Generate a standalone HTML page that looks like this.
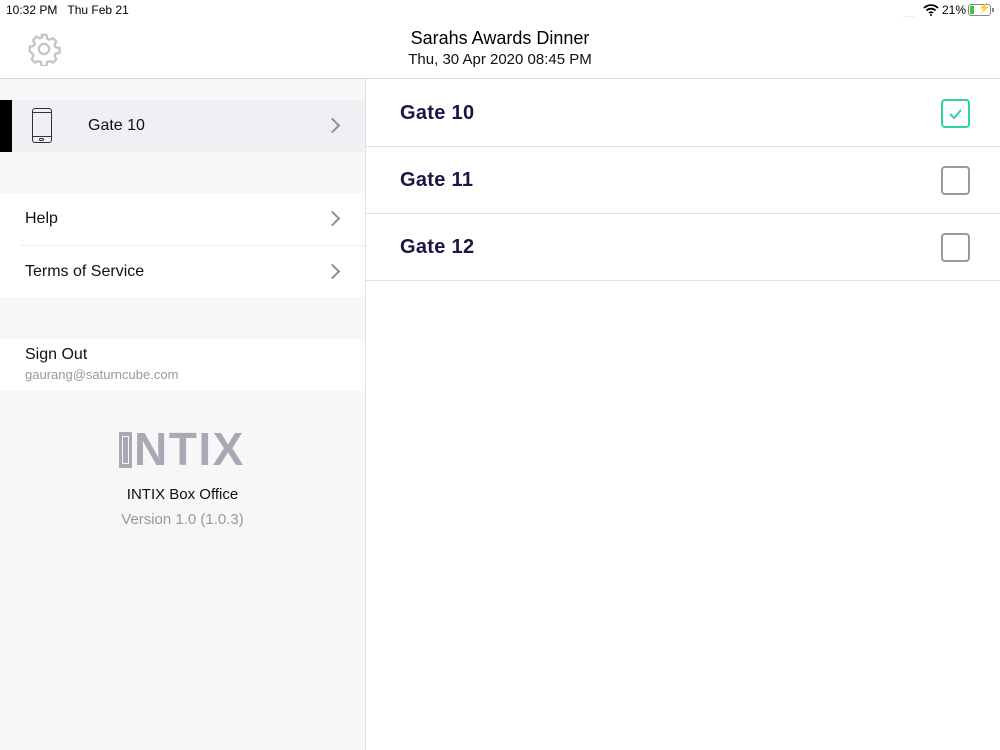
<!DOCTYPE html>
<html><head><style>
*{margin:0;padding:0;box-sizing:border-box}
body{width:1000px;height:750px;overflow:hidden;background:#fff;font-family:"Liberation Sans",sans-serif;position:relative}
.a{position:absolute}
.chev{position:absolute;width:11px;height:11px;border-right:2.5px solid #8e8e93;border-top:2.5px solid #8e8e93;transform:rotate(45deg)}
.row{position:absolute;left:366px;right:0;height:67px;border-bottom:1px solid #e0e0e0}
.row span{position:absolute;left:34px;top:22px;font-size:20px;color:#1e1446;font-weight:bold;letter-spacing:0.3px}
.cb{position:absolute;left:575px;top:19px;width:29px;height:29px;border:2px solid #9a9a9a;border-radius:4px}
</style></head><body>
<div class="a" style="left:6px;top:3px;font-size:12px;color:#000">10:32 PM&nbsp;&nbsp;&nbsp;Thu Feb 21</div>
<div class="a" style="left:903px;top:10px;font-size:8px;color:#bbb;letter-spacing:1px">....</div>
<svg class="a" style="left:923px;top:4px" width="16" height="12" viewBox="0 0 16 12"><path d="M1 4a10 10 0 0 1 14 0M3.5 6.5a6.5 6.5 0 0 1 9 0M6 9a3 3 0 0 1 4 0" stroke="#000" stroke-width="1.8" fill="none"/><circle cx="8" cy="11" r="1" fill="#000"/></svg>
<div class="a" style="left:942px;top:3px;font-size:12px">21%</div>
<div class="a" style="left:968px;top:4px;width:23px;height:12px;border:1px solid #888;border-radius:3px"><div style="position:absolute;left:1px;top:1px;width:4px;height:8px;background:#3c3"></div><div style="position:absolute;left:9px;top:-2px;font-size:10px">⚡</div></div>
<div class="a" style="left:992px;top:8px;width:2px;height:4px;background:#888"></div>
<svg class="a" style="left:27px;top:32px" width="34" height="34" viewBox="0 0 24 24"><path fill="none" stroke="#c4c4c4" stroke-width="1.6" d="M10.3 2h3.4l.5 2.6 1.7.9 2.4-1.2 2.4 2.4-1.2 2.4.7 1.7 2.8.5v3.4l-2.8.5-.7 1.7 1.2 2.4-2.4 2.4-2.4-1.2-1.7.7-.5 2.8h-3.4l-.5-2.8-1.7-.7-2.4 1.2-2.4-2.4 1.2-2.4-.7-1.7L2 13.7v-3.4l2.8-.5.7-1.7-1.2-2.4 2.4-2.4 2.4 1.2 1.7-.9z"/><circle cx="12" cy="12" r="3.6" fill="none" stroke="#c4c4c4" stroke-width="1.6"/></svg>
<div class="a" style="left:0;width:1000px;top:28px;text-align:center;font-size:18px;color:#000">Sarahs Awards Dinner</div>
<div class="a" style="left:0;width:1000px;top:51px;text-align:center;font-size:15px;color:#111">Thu, 30 Apr 2020 08:45 PM</div>
<div class="a" style="left:0;top:78px;width:1000px;height:1px;background:#d8d8d8"></div>
<div class="a" style="left:0;top:79px;width:365px;height:671px;background:#f7f7f7"></div>
<div class="a" style="left:365px;top:79px;width:1px;height:671px;background:#e0e0e0"></div>
<div class="a" style="left:0;top:100px;width:365px;height:52px;background:#efeff4"></div>
<div class="a" style="left:0;top:100px;width:12px;height:52px;background:#000"></div>
<div class="a" style="left:32px;top:108px;width:20px;height:35px;border:1.5px solid #333;border-radius:3px"><div style="position:absolute;left:0;right:0;top:3px;height:1px;background:#333"></div><div style="position:absolute;left:0;right:0;bottom:5px;height:1px;background:#333"></div><div style="position:absolute;left:6px;bottom:1px;width:5px;height:3px;border:1px solid #333;border-radius:2px"></div></div>
<div class="a" style="left:88px;top:117px;font-size:16px;color:#111">Gate 10</div>
<div class="chev" style="left:327px;top:120px"></div>
<div class="a" style="left:0;top:193px;width:365px;height:104px;background:#fff"></div>
<div class="a" style="left:20px;top:245px;width:345px;height:1px;background:#eee"></div>
<div class="a" style="left:25px;top:210px;font-size:16px;color:#111">Help</div>
<div class="chev" style="left:327px;top:213px"></div>
<div class="a" style="left:25px;top:263px;font-size:16px;color:#111">Terms of Service</div>
<div class="chev" style="left:327px;top:266px"></div>
<div class="a" style="left:0;top:339px;width:365px;height:52px;background:#fff"></div>
<div class="a" style="left:25px;top:346px;font-size:16px;color:#111">Sign Out</div>
<div class="a" style="left:25px;top:367px;font-size:13px;color:#999">gaurang@saturncube.com</div>
<div class="a" style="left:119px;top:432px;width:13px;height:36px;background:#a9a9b3"><div style="position:absolute;left:3px;top:4px;width:7px;height:28px;border:1px solid #f7f7f7"></div></div>
<div class="a" style="left:134px;top:424px;font-size:46px;font-weight:bold;color:#a9a9b3;letter-spacing:1.5px;line-height:50px">NTIX</div>
<div class="a" style="left:0;width:365px;top:486px;text-align:center;font-size:15px;color:#111">INTIX Box Office</div>
<div class="a" style="left:0;width:365px;top:511px;text-align:center;font-size:15px;color:#999">Version 1.0 (1.0.3)</div>
<div class="row" style="top:80px"><span>Gate 10</span><div class="cb" style="border-color:#2ed3a8"><svg width="25" height="25" viewBox="0 0 25 25"><path d="M7 13l4 4 7-8" stroke="#2ed3a8" stroke-width="2" fill="none"/></svg></div></div>
<div class="row" style="top:147px"><span>Gate 11</span><div class="cb"></div></div>
<div class="row" style="top:214px"><span>Gate 12</span><div class="cb"></div></div>
</body></html>
